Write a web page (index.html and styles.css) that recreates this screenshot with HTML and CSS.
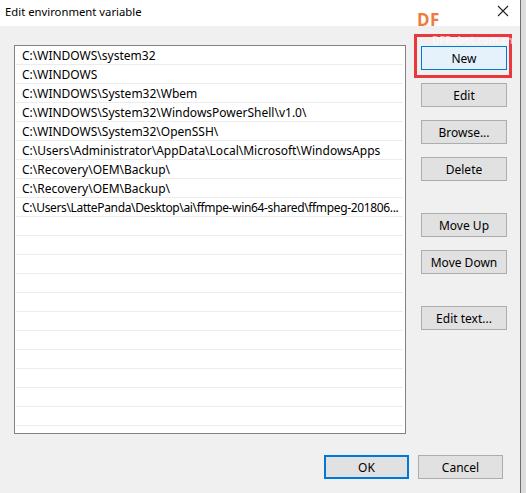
FILE: index.html
```html
<!DOCTYPE html>
<html lang="en">
<head>
    <meta charset="UTF-8">
    <meta name="viewport" content="width=device-width, initial-scale=1.0">
    <title>Edit environment variable</title>
    <link rel="stylesheet" href="styles.css">
</head>
<body>
    <div class="window">
        <!-- Title bar -->
        <div class="titlebar">
            <span class="title">Edit environment variable</span>
            <span class="close">
                <svg width="12" height="12" viewBox="0 0 12 12">
                    <path d="M1 1 L11 11 M11 1 L1 11" stroke="#222" stroke-width="1.1" fill="none"/>
                </svg>
            </span>
        </div>

        <div class="content">
            <div class="main">
                <!-- Path entries -->
                <ul class="path-list">
                    <li>C:\WINDOWS\system32</li>
                    <li>C:\WINDOWS</li>
                    <li>C:\WINDOWS\System32\Wbem</li>
                    <li>C:\WINDOWS\System32\WindowsPowerShell\v1.0\</li>
                    <li>C:\WINDOWS\System32\OpenSSH\</li>
                    <li>C:\Users\Administrator\AppData\Local\Microsoft\WindowsApps</li>
                    <li>C:\Recovery\OEM\Backup\</li>
                    <li>C:\Recovery\OEM\Backup\</li>
                    <li class="tight">C:\Users\LattePanda\Desktop\ai\ffmpe-win64-shared\ffmpeg-201806...</li>
                    <li></li><li></li><li></li><li></li><li></li><li></li>
                    <li></li><li></li><li></li><li></li><li></li>
                </ul>

                <!-- Side buttons -->
                <div class="actions">
                    <button class="btn btn-focus">New</button>
                    <button class="btn">Edit</button>
                    <button class="btn">Browse...</button>
                    <button class="btn">Delete</button>
                    <button class="btn gap-large">Move Up</button>
                    <button class="btn">Move Down</button>
                    <button class="btn gap-large">Edit text...</button>
                </div>
            </div>

            <div class="footer">
                <button class="btn btn-default">OK</button>
                <button class="btn">Cancel</button>
            </div>
        </div>

        <!-- highlight around the New button -->
        <div class="highlight"></div>
        <div class="logo">DF</div>
        <div class="watermark">DFRobot.com.cn</div>
    </div>
</body>
</html>
```

FILE: styles.css
```css
* {
    box-sizing: border-box;
}

body {
    margin: 0;
    background-color: #dcdcdc;
    font-family: "Segoe UI", "Noto Sans", sans-serif;
    font-size: 12px;
    color: #000;
}

.window {
    position: relative;
    width: 521px;
    height: 493px;
    background-color: #f0f0f0;
    border-right: 1px solid #6f6f6f;
}

.titlebar {
    height: 26px;
    background-color: #fff;
    display: flex;
    align-items: center;
    justify-content: space-between;
    padding-left: 5px;
}

.title {
    font-size: 11.3px;
    margin-top: -4px;
}

.close {
    width: 28px;
    display: flex;
    justify-content: center;
    margin-right: 3px;
    margin-top: -4px;
}

.content {
    padding: 19px 0 0 14px;
}

.main {
    display: flex;
}

.path-list {
    list-style: none;
    margin: 0;
    padding: 0;
    width: 392px;
    height: 389px;
    background-color: #fff;
    border: 1px solid #828282;
    overflow: hidden;
}

.path-list li {
    height: 19px;
    line-height: 19px;
    margin: 0 2px 0 1px;
    padding-left: 6px;
    border-bottom: 1px solid #ececec;
    white-space: nowrap;
    overflow: hidden;
}

.path-list li.tight {
    letter-spacing: -0.35px;
}

.actions {
    display: flex;
    flex-direction: column;
    gap: 13px;
    margin-left: 15px;
    padding-top: 1px;
}

.btn {
    width: 86px;
    height: 24px;
    padding: 0;
    font-family: inherit;
    font-size: 12px;
    color: #000;
    background-color: #e1e1e1;
    border: 1px solid #adadad;
}

.btn-focus {
    background-color: #e5f1fb;
    border-color: #0078d7;
}

.btn-default {
    border: 2px solid #0078d7;
}

.gap-large {
    margin-top: 19px;
}

.footer {
    display: flex;
    justify-content: flex-end;
    gap: 9px;
    margin-top: 21px;
    padding-right: 17px;
}

.footer .btn {
    width: 85px;
}

.highlight {
    position: absolute;
    left: 414px;
    top: 34px;
    width: 98px;
    height: 44px;
    border: 3px solid #e8383d;
}

.logo {
    position: absolute;
    left: 417px;
    top: 8px;
    font-family: "Open Sans", sans-serif;
    font-weight: bold;
    font-size: 17px;
    letter-spacing: 0.5px;
    color: #ef7a3c;
}

.watermark {
    position: absolute;
    left: 432px;
    top: 33px;
    font-family: "Open Sans", sans-serif;
    font-weight: bold;
    font-size: 10px;
    color: rgba(255, 255, 255, 0.6);
}
```
